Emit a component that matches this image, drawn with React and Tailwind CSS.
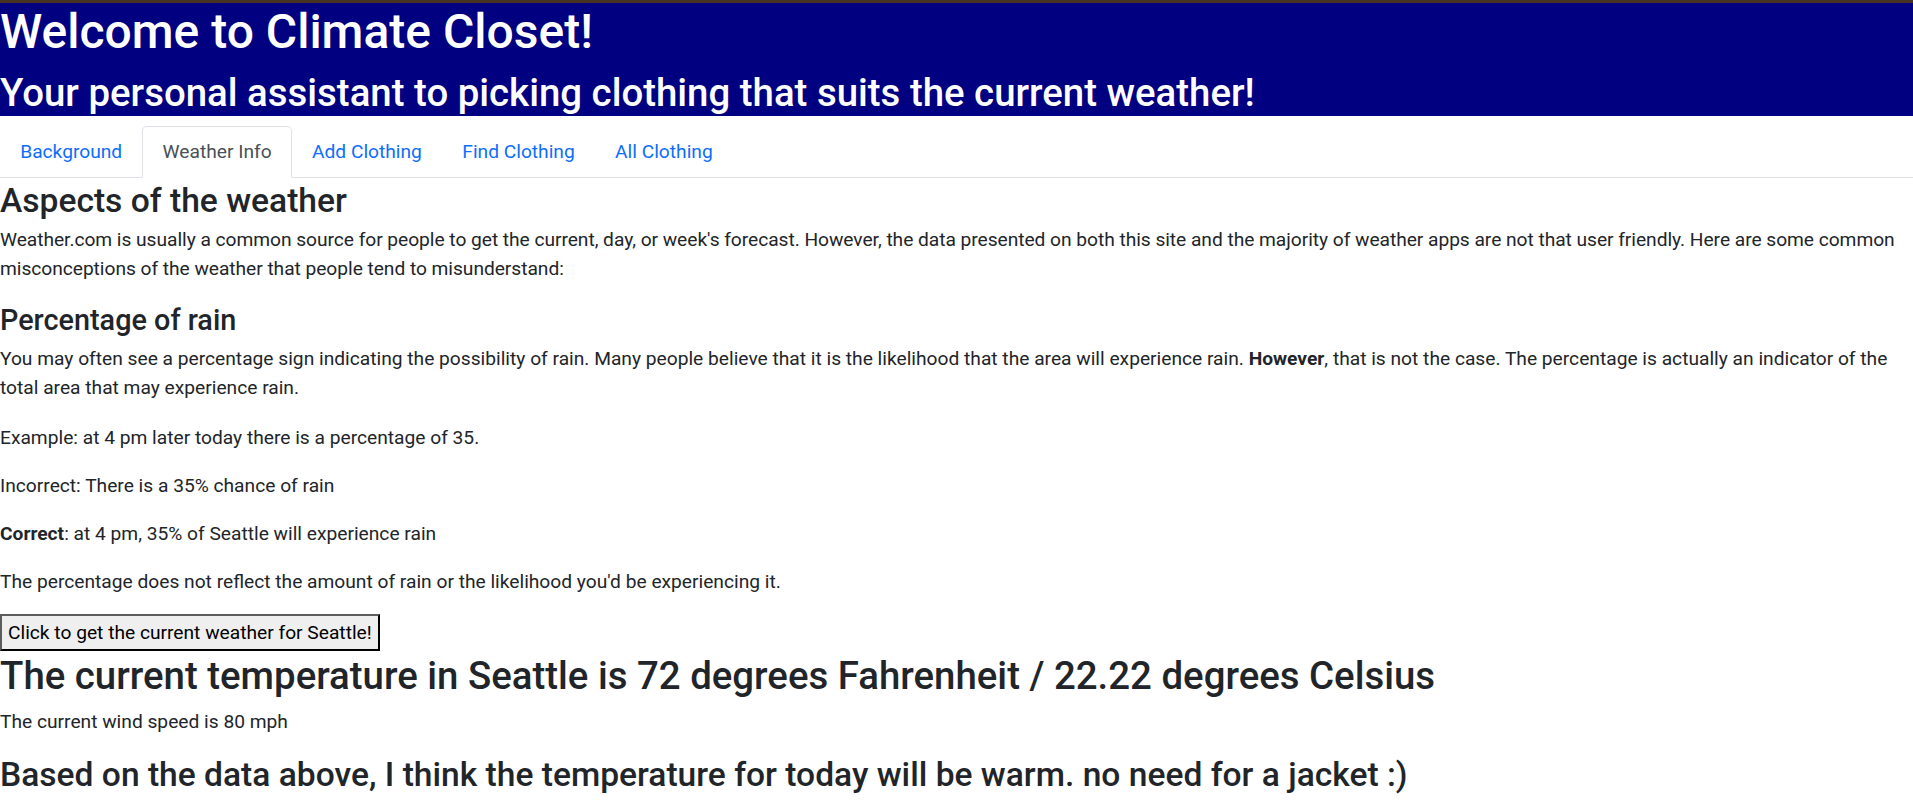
import React, { useState } from 'react';

const tabs = ['Background', 'Weather Info', 'Add Clothing', 'Find Clothing', 'All Clothing'];

const App = () => {
  const [activeTab, setActiveTab] = useState('Weather Info');

  return (
    <div className="min-h-[800px] bg-white text-[#212529] text-[19.2px] leading-[28.8px] font-['Roboto',sans-serif]">
      {/* Header */}
      <div className="h-[3px] bg-[#47331f]"></div>
      <div className="bg-[#000080] text-white">
        <h1 className="text-[48px] leading-[57.6px] font-medium mb-[9.6px]">Welcome to Climate Closet!</h1>
        <h2 className="text-[38.4px] leading-[46px] font-medium">
          Your personal assistant to picking clothing that suits the current weather!
        </h2>
      </div>

      {/* Tabs */}
      <ul className="flex mt-[9.6px] border-b border-[#dee2e6]">
        {tabs.map((tab) => (
          <li key={tab} className="-mb-px">
            <button
              onClick={() => setActiveTab(tab)}
              className={`block px-[19.2px] pt-[11.6px] pb-[9.6px] border rounded-t-[4.8px] ${
                activeTab === tab
                  ? 'text-[#495057] bg-white border-[#dee2e6] border-b-white'
                  : 'text-[#0d6efd] border-transparent'
              }`}
            >
              {tab}
            </button>
          </li>
        ))}
      </ul>

      {/* Weather info */}
      <div>
        <h3 className="text-[33.6px] leading-[40.3px] font-medium mt-[3px] mb-[5px]">Aspects of the weather</h3>
        <p className="mb-[19.2px] tracking-[-0.04px]">
          Weather.com is usually a common source for people to get the current, day, or week's forecast. However, the data presented on both this site and the majority of weather apps are not that user friendly. Here are some common misconceptions of the weather that people tend to misunderstand:
        </p>

        <h4 className="text-[28.8px] leading-[34.6px] font-medium mt-[2px] mb-[7.6px]">Percentage of rain</h4>
        <p className="mb-[21.5px]">
          You may often see a percentage sign indicating the possibility of rain. Many people believe that it is the likelihood that the area will experience rain. <b className="font-bold">However</b>, that is not the case. The percentage is actually an indicator of the total area that may experience rain.
        </p>
        <p className="mb-[19.2px]">Example: at 4 pm later today there is a percentage of 35.</p>
        <p className="mb-[19.2px]">Incorrect: There is a 35% chance of rain</p>
        <p className="mb-[19.2px]">
          <b className="font-bold">Correct</b>: at 4 pm, 35% of Seattle will experience rain
        </p>
        <p className="mb-[17px]">The percentage does not reflect the amount of rain or the likelihood you'd be experiencing it.</p>

        <button className="h-[37px] px-[6px] bg-[#efefef] text-black text-[19.2px] leading-[29px] border-2 border-t-[#5c5c5c] border-l-[#5c5c5c] border-r-black border-b-black">
          Click to get the current weather for Seattle!
        </button>

        <h2 className="text-[38.4px] leading-[46px] font-medium mt-[2px] mb-[9.6px]">
          The current temperature in Seattle is 72 degrees Fahrenheit / 22.22 degrees Celsius
        </h2>
        <p className="mb-[18px]">The current wind speed is 80 mph</p>
        <h3 className="text-[33.6px] leading-[40.3px] font-medium mb-[9.6px]">
          Based on the data above, I think the temperature for today will be warm. no need for a jacket :)
        </h3>
      </div>
    </div>
  );
};

export default App;
